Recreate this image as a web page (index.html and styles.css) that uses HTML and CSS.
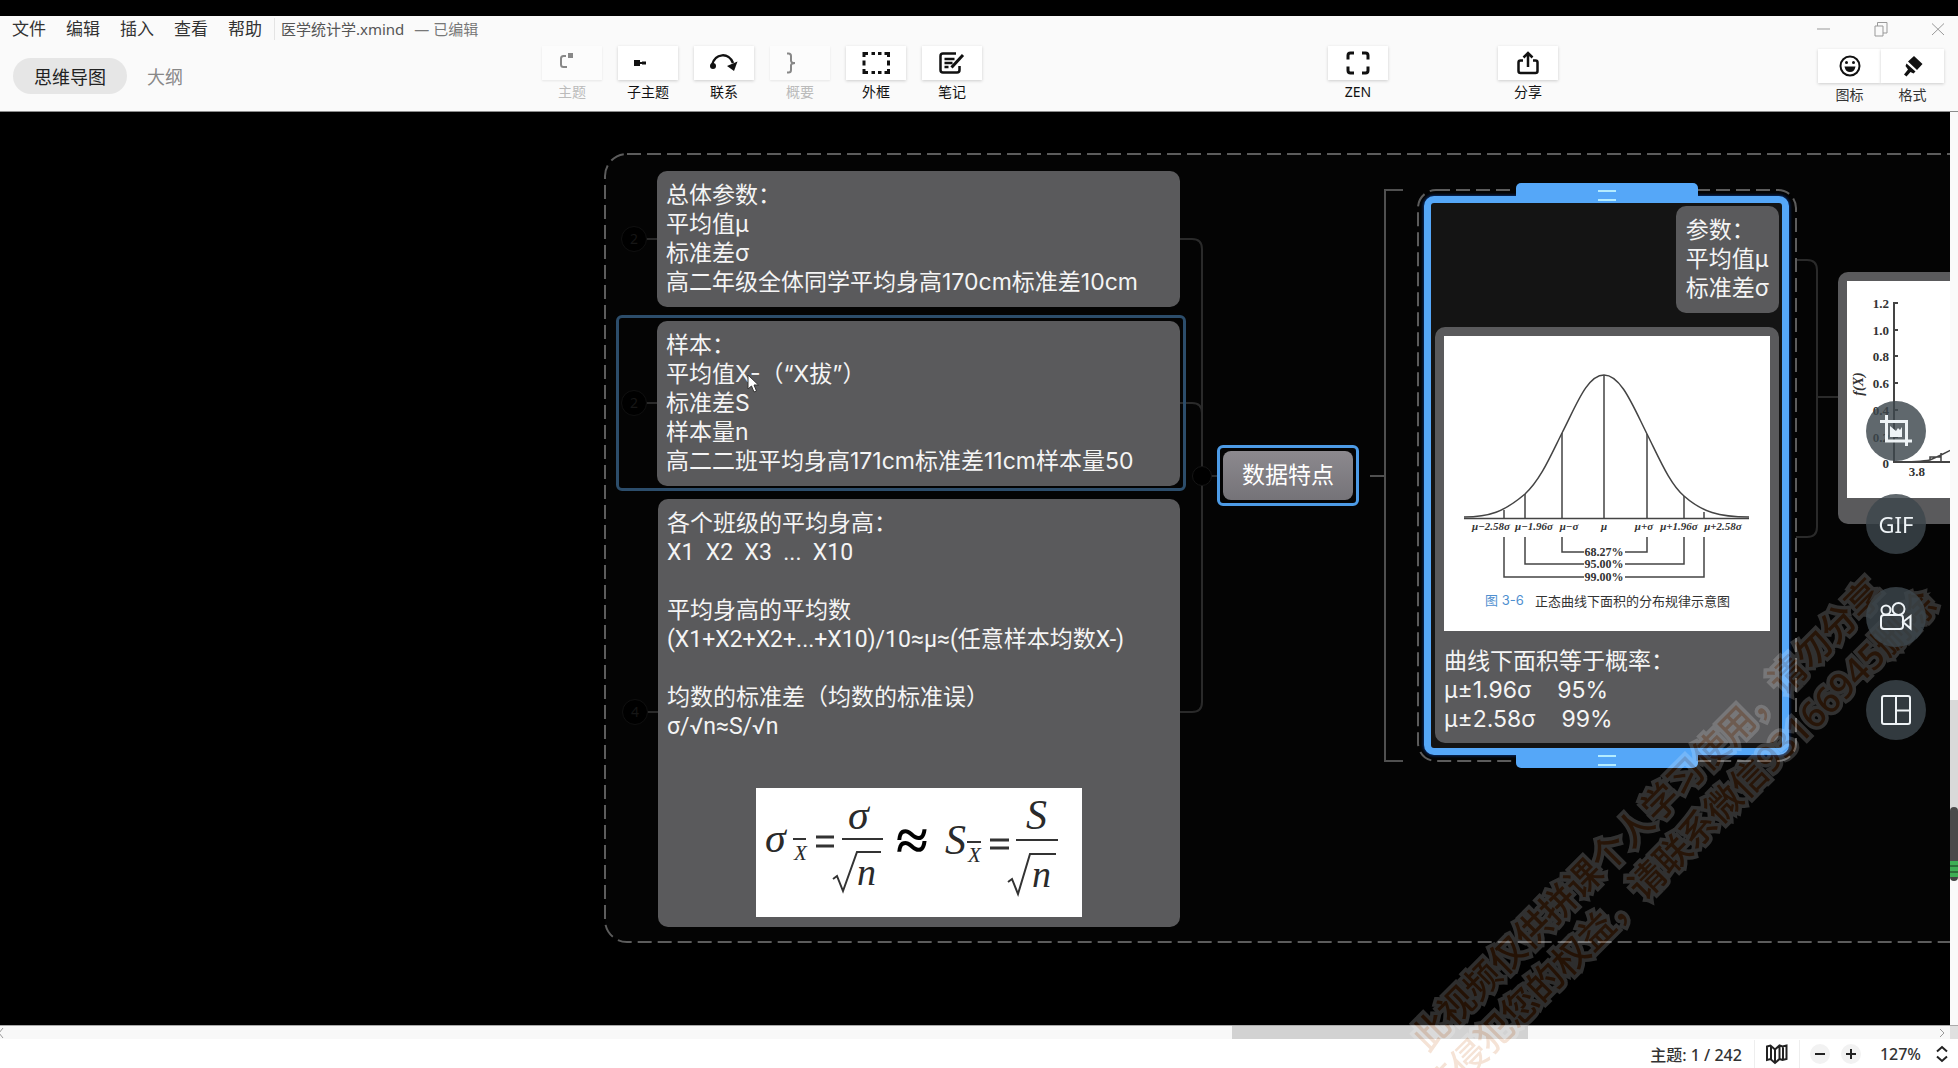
FILE: index.html
```html
<!DOCTYPE html>
<html lang="zh-CN">
<head>
<meta charset="utf-8">
<title>医学统计学.xmind</title>
<link rel="stylesheet" href="styles.css">
</head>
<body>
<header class="header">
  <div class="titlebar">
    <nav class="menu">
      <button type="button">文件</button>
      <button type="button">编辑</button>
      <button type="button">插入</button>
      <button type="button">查看</button>
      <button type="button">帮助</button>
    </nav>
    <h1 class="doc-title">医学统计学.xmind</h1>
    <span class="doc-state">— 已编辑</span>
    <div class="window-controls">
      <button type="button" aria-label="最小化"><svg width="16" height="16" viewBox="0 0 16 16"><path d="M1 8h13"/></svg></button>
      <button type="button" aria-label="还原"><svg width="16" height="16" viewBox="0 0 16 16"><path d="M2 5h8v10H2zM4.500 5V1.500h9.500V12H10"/></svg></button>
      <button type="button" aria-label="关闭"><svg width="16" height="16" viewBox="0 0 16 16"><path d="M2 2.500l12 11.500M14 2.500L2 14"/></svg></button>
    </div>
  </div>
  <div class="toolbar">
    <div class="tabs">
      <button type="button" class="tab tab-active">思维导图</button>
      <button type="button" class="tab">大纲</button>
    </div>
    <div class="tools">
      <button type="button" class="tool" disabled><span class="tool-face"><svg width="28" height="24" viewBox="0 0 28 24"><path d="M8 5H5.500Q3 5 3 7.500v6Q3 16 5.500 16H9" fill="none" stroke="currentColor" stroke-width="2"/><path d="M10 2h5v5h-5z"/></svg></span>主题</button>
      <button type="button" class="tool"><span class="tool-face"><svg width="28" height="24" viewBox="0 0 28 24"><path d="M0 9h6v6H0zM6 11h2v2H6zM8 10.500h4v3H8z"/></svg></span>子主题</button>
      <button type="button" class="tool"><span class="tool-face"><svg width="28" height="24" viewBox="0 0 28 24"><path d="M2 14C5 2 19 1 23 12" fill="none" stroke="currentColor" stroke-width="2.500"/><circle cx="3" cy="15" r="3"/><path d="M17 15l10.500-4.500L24 20z"/></svg></span>联系</button>
      <button type="button" class="tool" disabled><span class="tool-face"><svg width="28" height="24" viewBox="0 0 28 24"><path d="M1 2.500h1.500Q5 2.500 5 5v4.500Q5 12 9 12 5 12 5 14.500V19Q5 21.500 2.500 21.500H1" fill="none" stroke="currentColor" stroke-width="2"/></svg></span>概要</button>
      <button type="button" class="tool"><span class="tool-face"><svg width="28" height="24" viewBox="0 0 28 24"><path d="M2 6V2.500h4M9.500 2.500h3.500M16 2.500h3.500M22.500 2.500h4V6M26.500 9.500v5M26.500 18v3.500h-4M19.500 21.500H16M13 21.500H9.500M6 21.500H2V18M2 14.500v-5" fill="none" stroke="currentColor" stroke-width="3"/></svg></span>外框</button>
      <button type="button" class="tool"><span class="tool-face"><svg width="28" height="24" viewBox="0 0 28 24"><path d="M18 2.500H5Q2.500 2.500 2.500 5v14q0 2.500 2.500 2.500h14q2.500 0 2.500-2.500v-4M6.500 8h10M6.500 12h8M6.500 16h4" fill="none" stroke="currentColor" stroke-width="2.500"/><path d="M13.500 16.500L25 4" stroke="currentColor" stroke-width="3"/></svg></span>笔记</button>
    </div>
    <button type="button" class="tool"><span class="tool-face"><svg width="24" height="24" viewBox="0 0 24 24"><path d="M2 8.500V4.500Q2 2 4.500 2H8M16 2h3.500Q22 2 22 4.500v4M22 15.500v4q0 2.500-2.500 2.500H16M8 22H4.500Q2 22 2 19.500v-4" fill="none" stroke="currentColor" stroke-width="3"/></svg></span>ZEN</button>
    <button type="button" class="tool"><span class="tool-face"><svg width="24" height="24" viewBox="0 0 24 24"><path d="M7 9.500H4.500Q2.500 9.500 2.500 11.500V20q0 2 2 2h15q2 0 2-2v-8.500q0-2-2-2H17M12 16V3M7.500 6.500L12 2l4.500 4.500" fill="none" stroke="currentColor" stroke-width="2.500"/></svg></span>分享</button>
    <div class="panels">
      <button type="button" class="tool"><span class="tool-face"><svg width="24" height="24" viewBox="0 0 24 24"><circle cx="12" cy="12" r="9.500" fill="none" stroke="currentColor" stroke-width="2"/><circle cx="8.500" cy="8.500" r="1.500"/><circle cx="15.500" cy="8.500" r="1.500"/><path d="M6.500 12.500h11q-1 5.500-5.500 5.500t-5.500-5.500z"/></svg></span>图标</button>
      <button type="button" class="tool"><span class="tool-face"><svg width="24" height="24" viewBox="0 0 24 24"><path d="M13 2l8.500 8-5.500 6-9-8.500zM5.500 9.500l9 8-2 2-3-1.500-4 4.500-2.500-2 4-5-2.500-3.500z"/></svg></span>格式</button>
    </div>
  </div>
</header>

<main class="workspace">
  <div class="canvas">
    <svg class="links" width="100%" height="100%" aria-hidden="true">
      <g transform="translate(0 -112)" fill="none">
        <rect class="boundary" x="605" y="154" width="1600" height="788" rx="22"/>
        <path class="link" d="M646 239h12M646 403h12M647 712h12M1180 239h12q10 0 10 10v453q0 10-10 10h-12M1180 403h12q10 0 10 10M1211 476h8"/>
        <path class="bracket" d="M1403 190h-18v571h18M1370 476h15"/>
        <path class="link" d="M1779 260h28q10 0 10 10v257q0 10-10 10h-28M1817 397h22"/>
        <rect class="boundary" x="1418" y="190" width="378" height="571" rx="18"/>
      </g>
    </svg>

    <button type="button" class="fold fold-a">2</button>
    <button type="button" class="fold fold-b">2</button>
    <button type="button" class="fold fold-c">4</button>
    <span class="joint"></span>

    <section class="node node-population"><p>总体参数：
平均值μ
标准差σ
高二年级全体同学平均身高170cm标准差10cm</p></section>

    <div class="hover-frame"></div>
    <section class="node node-sample"><p>样本：
平均值X-（“X拔”）
标准差S
样本量n
高二二班平均身高171cm标准差11cm样本量50</p></section>

    <section class="node node-means">
      <p>各个班级的平均身高：
X1  X2  X3  ...  X10

平均身高的平均数
(X1+X2+X2+...+X10)/10≈μ≈(任意样本均数X-)

均数的标准差（均数的标准误）
σ/√n≈S/√n</p>
      <svg class="formula" width="326" height="129" viewBox="0 0 326 129" role="img" aria-label="标准误公式">
        <g font-size="42"><text x="9" y="64">σ</text><text x="92" y="41">σ</text><text x="189" y="66">S</text><text x="270" y="41">S</text></g>
        <g font-size="38"><text x="101" y="97">n</text><text x="276" y="99">n</text></g>
        <g font-size="21"><text x="38" y="72">X</text><text x="212" y="74">X</text></g>
        <text class="approx" x="140" y="72" font-size="58">≈</text>
        <g fill="none" stroke="#333" stroke-width="2">
          <path d="M37 51h13M86 51h41M211 54h14M260 52h42"/>
          <path d="M77 91l4-3 6 15 14-39h24M252 94l4-3 6 15 12-40h26"/>
          <path d="M60 49h18M60 58h18M234 52h19M234 60h19" stroke-width="3"/>
        </g>
      </svg>
    </section>

    <section class="topic"><h2>数据特点</h2></section>

    <section class="summary">
      <span class="grip grip-top"></span>
      <div class="node node-params"><p>参数：
平均值μ
标准差σ</p></div>
      <div class="node node-curve">
        <svg class="chart" width="326" height="295" viewBox="0 0 326 295" role="img" aria-label="正态曲线下面积的分布规律示意图">
          <g fill="none" stroke="#444" stroke-width="1.500">
            <path d="M20 181C45 181 60 176 81 158C97 143 107 119 118 97C132 70 143 39 160 39C177 39 189 70 203 98C216 124 226 148 240 160C258 176 275 181 305 181"/>
            <path d="M20 182.500H305M160 39v143M118 97v85M203 98v84M81 158v24M240 160v22M60 174v8M260 176v6"/>
            <path d="M118 201v15h22M181 216h22v-15M81 201v27h59M181 228h59v-27M60 201v40h80M181 241h79v-40"/>
          </g>
          <g class="axis-labels">
            <text x="47" y="194">μ−2.58σ</text><text x="90" y="194">μ−1.96σ</text><text x="125" y="194">μ−σ</text><text x="160" y="194">μ</text><text x="200" y="194">μ+σ</text><text x="235" y="194">μ+1.96σ</text><text x="279" y="194">μ+2.58σ</text>
          </g>
          <g class="percents">
            <text x="160" y="220">68.27%</text><text x="160" y="232">95.00%</text><text x="160" y="245">99.00%</text>
          </g>
          <text class="caption caption-no" x="41" y="269">图 3-6</text>
          <text class="caption" x="91" y="270">正态曲线下面积的分布规律示意图</text>
        </svg>
        <p>曲线下面积等于概率：
μ±1.96σ    95%
μ±2.58σ    99%</p>
      </div>
      <span class="grip grip-bottom"></span>
    </section>

    <section class="node node-histogram">
      <svg class="chart" width="326" height="217" viewBox="0 0 326 217" role="img" aria-label="f(X) 分布图">
        <path d="M51 22H47V181H130M47 49h4M47 75h4M47 102h4M47 129h4M47 156h4" fill="none" stroke="#444" stroke-width="2"/>
        <path d="M47 181q26 0 36-2l11-5 10-5M83 179v-3h11v-4M94 172v9" fill="none" stroke="#444" stroke-width="1.500"/>
        <g class="y-labels">
          <text x="42" y="27">1.2</text><text x="42" y="54">1.0</text><text x="42" y="80">0.8</text><text x="42" y="107">0.6</text><text x="42" y="134">0.4</text><text x="42" y="161">0.2</text><text x="42" y="187">0</text><text x="78" y="195">3.8</text>
        </g>
        <text class="y-title" transform="translate(16 103) rotate(-90)">f(X)</text>
      </svg>
    </section>

    <svg class="cursor" width="14" height="20" viewBox="0 0 14 20" aria-hidden="true"><path d="M1 1v14l3.500-3 2.500 6 2.500-1-2.500-6h4.500z"/></svg>
  </div>
  <div class="vscroll"><span class="vthumb"></span></div>
</main>

<div class="hscroll">
  <svg width="8" height="12" viewBox="0 0 8 12"><path d="M3 1L-1 6l4 5"/></svg>
  <span class="htrack"><span class="hthumb"></span></span>
  <svg width="8" height="12" viewBox="0 0 8 12"><path d="M1 2l4 4-4 4"/></svg>
  <span class="corner"></span>
</div>

<footer class="status">
  <span class="count">主题: 1 / 242</span>
  <button type="button" class="map" aria-label="导航图"><svg width="24" height="22" viewBox="0 0 24 22"><path d="M2 3.500l3.500-1 4.500 4 4.500-4 3 1 4-1V16l-4 1-3-1-4.500 4-4.500-4-3.500 1zM6 3v13M10 6.500V20M14.500 3v13M18 3.500V17"/></svg></button>
  <button type="button" class="zoom-btn" aria-label="缩小"><svg width="12" height="12" viewBox="0 0 12 12"><path d="M1 6h10"/></svg></button>
  <button type="button" class="zoom-btn" aria-label="放大"><svg width="12" height="12" viewBox="0 0 12 12"><path d="M1 6h10M6 1v10"/></svg></button>
  <button type="button" class="zoom-level">127%<svg width="12" height="18" viewBox="0 0 12 18"><path d="M1 6.500L6 2l5 4.500M1 11.500L6 16l5-4.500"/></svg></button>
</footer>

<div class="watermark-layer" aria-hidden="true">
  <p class="watermark">此视频仅供拼课个人学习使用，请勿分享<br>若侵犯您的权益，请联系微信93166945删除</p>
</div>

<aside class="capture">
  <button type="button" aria-label="截图"><svg width="32" height="32" viewBox="0 0 32 32"><path d="M0 6.500h26.500V31M6.500 0v26H32" stroke-width="3"/><path d="M10 11l6 5 2-3 2 2 2-3v10H10z" fill="#eef3f6" stroke="none"/></svg></button>
  <button type="button">GIF</button>
  <button type="button" aria-label="录像"><svg width="34" height="30" viewBox="0 0 34 30"><circle cx="7" cy="8" r="4.500"/><circle cx="19.500" cy="7" r="6"/><rect x="2" y="13" width="22" height="14" rx="3"/><path d="M24 20l7.500-6v12.500z"/></svg></button>
  <button type="button" aria-label="布局"><svg width="30" height="30" viewBox="0 0 30 30"><path d="M3 1h24q2 0 2 2v24q0 2-2 2H3q-2 0-2-2V3q0-2 2-2zM15 1v28M15 15.500h14"/></svg></button>
</aside>
<span class="level-meter"></span>
</body>
</html>
```

FILE: styles.css
```css
* {
  box-sizing: border-box;
}

body {
  margin: 0;
  min-height: 100vh;
  display: flex;
  flex-direction: column;
  overflow: hidden;
  border-top: 16px solid #000;
  background: #fff;
  color: #333;
  font-family: "Noto Sans", "Noto Sans CJK SC", sans-serif;
}

h1, h2, p {
  margin: 0;
  font-weight: 400;
}

button {
  margin: 0;
  padding: 0;
  border: 0;
  background: none;
  color: inherit;
  font: inherit;
}

svg {
  display: block;
}

/* Header */
.header {
  background: #fafafa;
  border-bottom: 1px solid #8c8c8c;
}

.titlebar {
  display: flex;
  align-items: center;
  height: 26px;
  padding: 0 12px;
  font-size: 15px;
  line-height: 22px;
}

.menu {
  display: flex;
  gap: 20px;
  padding-right: 12px;
  margin-right: 6px;
  border-right: 1px solid #e4e4e4;
  font-size: 17px;
}

.doc-title {
  font-size: 15px;
  color: #555;
}

.doc-state {
  margin-left: 10px;
  color: #777;
}

.window-controls {
  display: flex;
  gap: 41px;
  margin-left: auto;
}

.window-controls svg {
  fill: none;
  stroke: #999;
}

.toolbar {
  display: grid;
  grid-template-columns: 542fr 786fr 170fr 320fr 140fr;
  justify-items: start;
  align-items: start;
  padding: 4px 0;
}

.tabs {
  display: flex;
  padding: 12px 0 0 13px;
}

.tab {
  height: 36px;
  padding: 0 20px;
  border-radius: 18px;
  color: #888;
  font-size: 18px;
}

.tab-active {
  padding: 0 21px;
  background: #e6e6e6;
  color: #222;
}

.tools {
  display: flex;
  gap: 16px;
}

.tool {
  width: 60px;
  color: #111;
  font-size: 14px;
  line-height: 24px;
}

.tool:disabled {
  color: #bbb;
}

.tool-face {
  display: grid;
  place-items: center;
  height: 34px;
  background: #fff;
  box-shadow: 0 1px 3px #ccc;
  fill: currentColor;
}

.tool:disabled .tool-face {
  background: #fcfcfc;
  box-shadow: 0 1px 2px #e6e6e6;
  color: #888;
}

.panels {
  display: flex;
  padding-top: 3px;
}

.panels .tool {
  width: 63px;
  color: #333;
}

.panels .tool-face {
  color: #111;
}

/* Mind map */
.workspace {
  flex: 1;
  display: flex;
}

.canvas {
  position: relative;
  flex: 1;
  overflow: hidden;
  background: #000;
}

.links {
  position: absolute;
  inset: 0;
}

.boundary {
  fill: #040404;
  stroke: #5c5c5c;
  stroke-width: 2;
  stroke-dasharray: 14 6;
}

.link {
  stroke: #2a2a2a;
  stroke-width: 2;
}

.bracket {
  stroke: #505050;
  stroke-width: 2;
}

.fold {
  position: absolute;
  width: 26px;
  height: 26px;
  border: 1px solid #101010;
  border-radius: 50%;
  background: #000;
  color: #161616;
  font-size: 14px;
  line-height: 24px;
}

.fold-a { left: 621px; top: 114px; }
.fold-b { left: 621px; top: 278px; }
.fold-c { left: 622px; top: 587px; }

.joint {
  position: absolute;
  left: 1192px;
  top: 354px;
  width: 20px;
  height: 20px;
  border: 1px solid #151515;
  border-radius: 50%;
  background: #000;
}

.node {
  position: absolute;
  padding: 10px 9px;
  border-radius: 10px;
  background: #5a5a5c;
  color: #f4f4f4;
  font-family: Inter, "Noto Sans CJK SC", sans-serif;
  font-size: 23px;
  line-height: 29px;
}

.node p {
  white-space: pre;
}

.node-population { left: 657px; top: 59px; width: 523px; }
.node-sample { left: 657px; top: 209px; width: 523px; }

.node-means {
  left: 658px;
  top: 387px;
  width: 522px;
  font-family: Roboto, Inter, "Noto Sans CJK SC", sans-serif;
}

.hover-frame {
  position: absolute;
  left: 616px;
  top: 203px;
  width: 570px;
  height: 176px;
  border: 3px solid #2c4d6b;
  border-radius: 6px;
}

.formula {
  margin: 47px auto 0;
  background: #fff;
  fill: #2a2a2a;
  font-family: "Liberation Serif", serif;
  font-style: italic;
}

.formula .approx {
  fill: #000;
  font-style: normal;
  font-weight: 700;
}

.topic {
  position: absolute;
  left: 1217px;
  top: 333px;
  padding: 3px;
  border: 3px solid #4d9be6;
  border-radius: 6px;
}

.topic h2 {
  padding: 10px 19px;
  border-radius: 8px;
  background: linear-gradient(#8c898e, #757378);
  color: #fff;
  font-family: Inter, "Noto Sans CJK SC", sans-serif;
  font-size: 23px;
  line-height: 29px;
}

.summary {
  position: absolute;
  left: 1424px;
  top: 84px;
  width: 365px;
  height: 559px;
  border: 7px solid #55a7f8;
  border-radius: 10px;
  background: #141414;
  box-shadow: 0 0 3px 1px #0a2b66;
}

.grip {
  position: absolute;
  left: 85px;
  width: 182px;
  height: 20px;
  border-radius: 5px 5px 0 0;
  background: #55a7f8;
}

.grip::after {
  content: "";
  position: absolute;
  left: 82px;
  top: 7px;
  width: 18px;
  height: 7px;
  border: solid #b4ecff;
  border-width: 2px 0;
}

.grip-top { top: -20px; }
.grip-bottom { bottom: -20px; border-radius: 0 0 5px 5px; }

.node-params {
  right: 3px;
  top: 3px;
  padding: 10px;
}

.node-curve {
  left: 4px;
  top: 124px;
  padding: 9px;
}

.node-curve .chart {
  margin-bottom: 16px;
}

.node-histogram {
  left: 1838px;
  top: 160px;
  padding: 9px 9px 26px;
}

.chart {
  background: #fff;
  fill: #333;
  font-family: "Liberation Serif", serif;
  font-weight: 700;
}

.axis-labels {
  font-size: 11px;
  font-style: italic;
  text-anchor: middle;
}

.percents {
  font-size: 12px;
  text-anchor: middle;
}

.caption {
  font-family: Inter, "Noto Sans CJK SC", sans-serif;
  font-size: 13px;
  font-weight: 400;
}

.caption-no {
  fill: #4f8fcf;
}

.y-labels {
  font-size: 13px;
  text-anchor: end;
}

.y-title {
  font-size: 14px;
  font-style: italic;
  text-anchor: middle;
}

.cursor {
  position: absolute;
  left: 747px;
  top: 262px;
  fill: #fff;
  stroke: #333;
}

/* Scroll bars */
.vscroll {
  width: 8px;
  padding-top: 588px;
  background: #fafafa;
}

.vthumb {
  display: block;
  height: 170px;
  background: #d9d9d9;
}

.hscroll {
  display: flex;
  height: 14px;
  align-items: center;
  background: #f8f8f8;
  border-top: 1px solid #aaa;
}

.hscroll svg {
  fill: none;
  stroke: #999;
}

.htrack {
  display: flex;
  flex: 1;
  height: 100%;
  justify-content: flex-end;
  padding-right: 21%;
}

.hthumb {
  width: 296px;
  height: 100%;
  background: #d2d2d2;
}

.corner {
  width: 8px;
  height: 100%;
  margin-left: 3px;
  background: #e0e0e0;
}

/* Status bar */
.status {
  display: flex;
  justify-content: flex-end;
  align-items: center;
  height: 29px;
  padding-right: 10px;
  background: #fff;
  font-size: 16px;
  font-weight: 500;
}

.status svg {
  fill: none;
  stroke: #222;
  stroke-width: 2;
}

.count {
  padding-right: 12px;
}

.map {
  padding: 3px 10px;
  margin-right: 10px;
  border: solid #eee;
  border-width: 0 1px;
}

.zoom-btn {
  display: grid;
  place-items: center;
  width: 20px;
  height: 20px;
  margin-right: 11px;
  border-radius: 50%;
  background: #f2f2f2;
}

.zoom-level {
  display: flex;
  align-items: center;
  gap: 15px;
  margin-left: 8px;
}

/* Overlays */
.watermark-layer {
  position: fixed;
  inset: 0;
  overflow: hidden;
  pointer-events: none;
}

.watermark {
  position: absolute;
  right: 294px;
  bottom: 237px;
  transform: translate(50%, 50%) rotate(-45deg);
  opacity: 0.18;
  color: #c8641e;
  -webkit-text-stroke: 7px #fff;
  paint-order: stroke fill;
  font-size: 36px;
  font-weight: 500;
  line-height: 46px;
  text-align: center;
  white-space: nowrap;
}

.capture {
  position: fixed;
  right: 32px;
  top: 401px;
  display: flex;
  flex-direction: column;
  gap: 33px;
}

.capture button {
  display: grid;
  place-items: center;
  width: 60px;
  height: 60px;
  border-radius: 50%;
  background: rgba(61, 71, 77, 0.82);
  color: #eef3f6;
  font-size: 22px;
}

.capture svg {
  fill: none;
  stroke: #eef3f6;
  stroke-width: 2;
}

.level-meter {
  position: fixed;
  right: 0;
  top: 807px;
  width: 8px;
  height: 74px;
  border-radius: 4px;
  background: linear-gradient(#4a4a4a 0 54px, #3fae55 54px 58px, #2c6e39 58px 60px, #3fae55 60px 64px, #2c6e39 64px 66px, #3fae55 66px 70px, #444 70px);
}
```
